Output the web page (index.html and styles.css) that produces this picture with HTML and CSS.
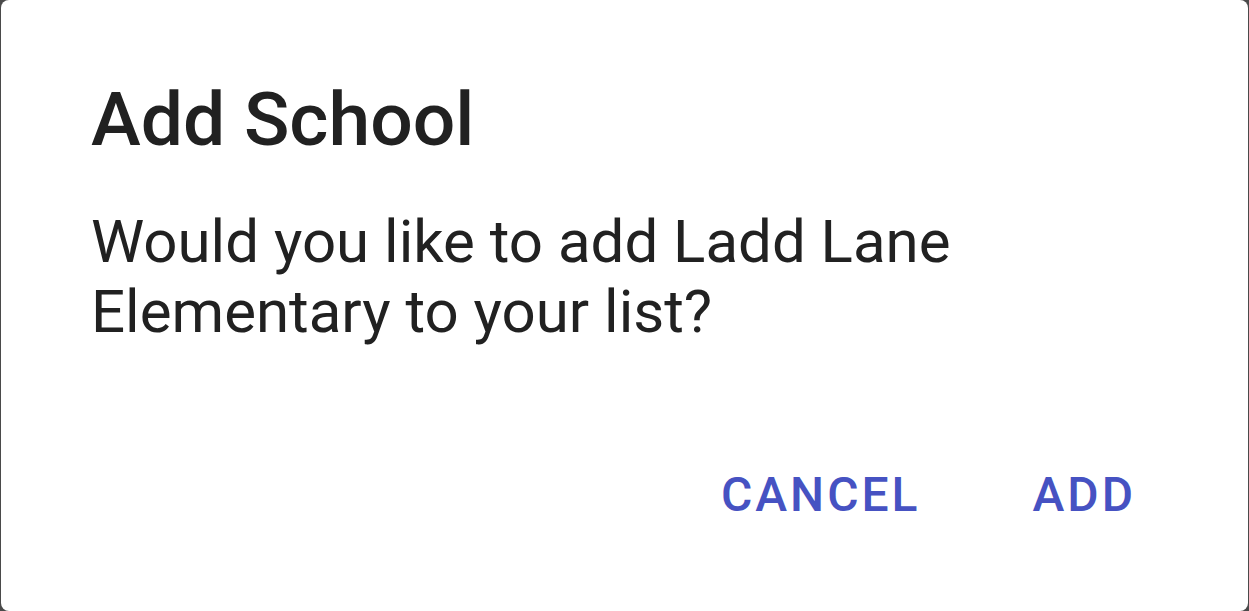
FILE: index.html
```html
<!DOCTYPE html>
<html lang="en">
<head>
<meta charset="utf-8">
<title>Add School</title>
<link rel="stylesheet" href="styles.css">
</head>
<body>
  <div class="dialog">
    <h1 class="dialog-title">Add School</h1>
    <p class="dialog-message">Would you like to add Ladd Lane<br>Elementary to your list?</p>
    <div class="dialog-actions">
      <button class="action-btn">CANCEL</button>
      <button class="action-btn">ADD</button>
    </div>
  </div>
</body>
</html>
```
FILE: styles.css
```css
html, body {
  margin: 0;
  padding: 0;
  height: 100%;
}
body {
  background: #4a4a4a;
  font-family: Roboto, "Noto Sans", sans-serif;
  overflow: hidden;
}
.dialog {
  box-sizing: border-box;
  height: 611px;
  margin: 0 1px;
  background: #ffffff;
  border-radius: 8px;
  padding: 74px 0 0 90px;
  display: flex;
  flex-direction: column;
}
.dialog-title {
  margin: 0;
  font-size: 75px;
  line-height: 90px;
  font-weight: 500;
  color: #212121;
}
.dialog-message {
  margin: 43px 0 0 0;
  font-size: 60px;
  line-height: 70px;
  font-weight: 400;
  color: #212121;
}
.dialog-actions {
  margin-top: 120px;
  padding-right: 112px;
  display: flex;
  justify-content: flex-end;
  gap: 112px;
}
.action-btn {
  border: none;
  background: none;
  padding: 0;
  font-family: Roboto, "Noto Sans", sans-serif;
  font-size: 48px;
  line-height: 56px;
  font-weight: 500;
  letter-spacing: 3px;
  color: #4652c2;
}
```
